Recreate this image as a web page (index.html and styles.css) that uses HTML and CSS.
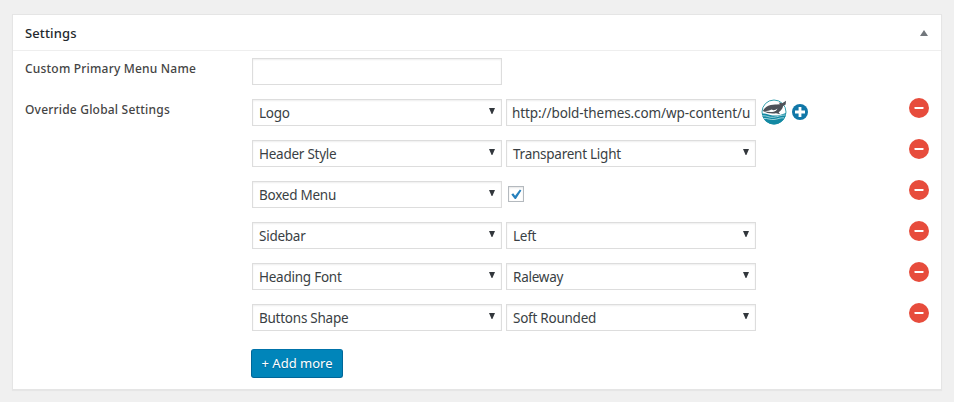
FILE: index.html
```html
<!DOCTYPE html>
<html lang="en">
<head>
<meta charset="utf-8">
<title>Settings</title>
<link rel="stylesheet" href="styles.css">
</head>
<body>
<svg width="0" height="0" class="defs">
  <symbol id="arrow" viewBox="0 0 6 6"><path d="M0 0h6L3.400 6H2.600z" fill="#32373c"/></symbol>
  <symbol id="minus" viewBox="0 0 20 20"><circle cx="10" cy="10" r="10" fill="#e74c3c"/><rect x="5.500" y="9" width="9" height="2" rx=".4" fill="#fff"/></symbol>
</svg>
<section class="panel">
  <header class="panel-head">
    <h2>Settings</h2>
    <svg class="toggle" viewBox="0 0 8 6"><path d="M4 0l4 6H0z" fill="#72777c"/></svg>
  </header>
  <div class="panel-body">
    <div class="label">Custom Primary Menu Name</div>
    <div class="rows"><div class="row"><input class="field" type="text"></div></div>
    <div class="label">Override Global Settings</div>
    <div class="rows">
      <div class="row">
        <div class="field"><span>Logo</span><svg class="arrow"><use href="#arrow"/></svg></div>
        <div class="field url"><span>http://bold-themes.com/wp-content/u</span></div>
        <svg class="logo" viewBox="0 0 26 26">
          <circle cx="13" cy="13" r="12" fill="#fff" stroke="#35a0ae" stroke-width="1"/>
          <path d="M.9 14.800c3.600-1.100 6 .8 9.300 1.500 5 1 9.300-.5 14.800-2.400A12.300 12.300 0 0 1 13 25.500C7 25.500 2 21.400.9 14.800z" fill="#1389a3"/>
          <path d="M1 16.800c5-.6 6.500 2 11.500 1.500 4.500-.4 7-2.500 12-2.300M2.500 19.500c4.500-.5 6.500 1.500 10.500 1 4-.4 6-2 10-1.700" fill="none" stroke="#d5f0f3" stroke-width=".7"/>
          <path d="M1.800 12c1.800-3.200 4.500-5.300 8-6 2-.5 4-.7 5.600-.5l3.600-.3-1.400-1.600 3.600.6 3.800-2.400-.3 3.600-2.600 1.600c-.5 2.700-2.200 4.800-4.400 6.200l1.400 2-4.100-1c-4 .8-9.300.1-13.200-2.200z" fill="#4d5158"/>
          <path d="M3.200 12c3-.2 5.300-.3 7.300-1.600l2 .9c1.500-.2 2.800-.8 4-1.800-.8 1.900-2 2.900-3.700 3.200-3.200.5-6.600.2-9.600-.7z" fill="#fff"/>
        </svg>
        <svg class="plus" viewBox="0 0 16 16"><circle cx="8" cy="8" r="8" fill="#1077a8"/><path d="M6.600 3h2.800v3.600H13v2.800H9.400V13H6.600V9.400H3V6.600h3.600z" fill="#fff"/></svg>
        <svg class="minus"><use href="#minus"/></svg>
      </div>
      <div class="row">
        <div class="field"><span>Header Style</span><svg class="arrow"><use href="#arrow"/></svg></div>
        <div class="field"><span>Transparent Light</span><svg class="arrow"><use href="#arrow"/></svg></div>
        <svg class="minus"><use href="#minus"/></svg>
      </div>
      <div class="row">
        <div class="field"><span>Boxed Menu</span><svg class="arrow"><use href="#arrow"/></svg></div>
        <div class="check"><svg viewBox="0 0 14 14"><path d="M2.300 7.600l1.900-1.300 1.900 2.500 4.800-6.300 1.500.9-5.500 8.500H5.800z" fill="#2680bd"/></svg></div>
        <svg class="minus"><use href="#minus"/></svg>
      </div>
      <div class="row">
        <div class="field"><span>Sidebar</span><svg class="arrow"><use href="#arrow"/></svg></div>
        <div class="field"><span>Left</span><svg class="arrow"><use href="#arrow"/></svg></div>
        <svg class="minus"><use href="#minus"/></svg>
      </div>
      <div class="row">
        <div class="field"><span>Heading Font</span><svg class="arrow"><use href="#arrow"/></svg></div>
        <div class="field"><span>Raleway</span><svg class="arrow"><use href="#arrow"/></svg></div>
        <svg class="minus"><use href="#minus"/></svg>
      </div>
      <div class="row">
        <div class="field"><span>Buttons Shape</span><svg class="arrow"><use href="#arrow"/></svg></div>
        <div class="field"><span>Soft Rounded</span><svg class="arrow"><use href="#arrow"/></svg></div>
        <svg class="minus"><use href="#minus"/></svg>
      </div>
      <button class="add">+ Add more</button>
    </div>
  </div>
</section>
</body>
</html>
```
FILE: styles.css
```css
* { box-sizing: border-box; }
body {
  margin: 0;
  padding: 14px 12px 12px;
  background: #f0f0f0;
  font: 13px/19px "Noto Sans", "Open Sans", sans-serif;
  color: #3a3f44;
}
svg { display: block; flex: none; }
.defs { display: none; }
.panel {
  height: 376px;
  background: #fff;
  border: 1px solid #e5e5e5;
  box-shadow: 0 1px 1px rgba(0, 0, 0, .04);
}
.panel-head {
  display: flex;
  justify-content: space-between;
  align-items: center;
  height: 36px;
  padding: 0 13px 0 12px;
  border-bottom: 1px solid #eee;
}
h2 {
  margin: 0;
  padding-top: 2px;
  font-size: 13px;
  font-weight: 500;
  letter-spacing: .12px;
  color: #23282d;
}
.toggle { width: 8px; height: 6px; }
.panel-body {
  display: grid;
  grid-template-columns: 227px 1fr;
  row-gap: 14px;
  padding: 7px 12px 0;
}
.label {
  padding-top: 1px;
  font-size: 12px;
  font-weight: 500;
  letter-spacing: .2px;
  color: #444;
}
.rows { display: flex; flex-direction: column; gap: 14px; }
.row { display: flex; align-items: center; gap: 4px; height: 27px; }
.field {
  display: flex;
  align-items: center;
  justify-content: space-between;
  width: 250px;
  height: 27px;
  padding: 2px 6px 0;
  border: 1px solid #ddd;
  background: #fff;
  box-shadow: inset 0 1px 2px rgba(0, 0, 0, .07);
  font-size: 13.5px;
  letter-spacing: -.25px;
  white-space: nowrap;
}
.url { padding-left: 5px; letter-spacing: -.09px; }
.arrow { width: 6px; height: 6px; margin-top: -5px; }
.logo { width: 26px; height: 26px; margin: -1px 0 0 1px; }
.plus { width: 16px; height: 16px; margin: -2px 0 0 1px; }
.minus { width: 20px; height: 20px; margin: -9px 0 0 auto; }
.check {
  width: 16px;
  height: 16px;
  margin: -2px 0 0 2px;
  border: 1px solid #b4b9be;
  box-shadow: inset 0 1px 2px rgba(0, 0, 0, .1);
}
.check svg { width: 14px; height: 14px; }
.add {
  width: 92px;
  height: 29px;
  margin: 4px 0 0 -1px;
  padding: 0 0 1px;
  border: 1px solid #006799;
  border-top-color: #0073aa;
  border-radius: 3px;
  background: #0085ba;
  color: #fff;
  font: 400 13px/25px "Noto Sans", "Open Sans", sans-serif;
  text-shadow: 0 1px 1px #006799;
}
```
